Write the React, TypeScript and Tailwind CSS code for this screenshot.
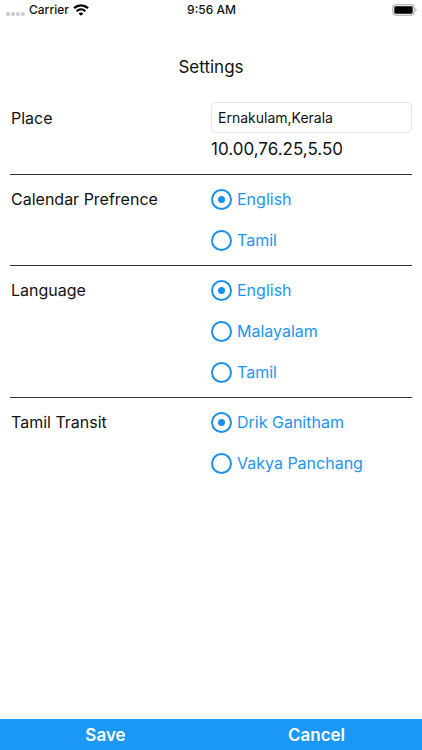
import { useState } from "react";

function StatusBar() {
  return (
    <header className="grid h-5 grid-cols-3 items-center pr-[5px] pl-[6px] text-[12px] leading-5 font-medium">
      <div className="flex items-center gap-1">
        <div className="flex pt-[7px]">
          {[0, 1, 2, 3].map((dot) => (
            <span key={dot} className="mr-px size-[4px] rounded-full bg-[#c9c9c9] last:mr-0" />
          ))}
        </div>
        <span>Carrier</span>
        <svg width="16" height="12" viewBox="0 0 16 12" fill="none" stroke="black" aria-hidden="true">
          <path d="M1 4.2C5 .4 11 .4 15 4.2" strokeWidth="2.3" />
          <path d="M3.6 7.2c2.6-2.4 6.2-2.4 8.8 0" strokeWidth="2.2" />
          <path d="M8 11.8 5.6 9.4c1.4-1.3 3.4-1.3 4.8 0z" fill="black" stroke="none" />
        </svg>
      </div>
      <time className="text-center">9:56 AM</time>
      <svg className="justify-self-end" width="25" height="12" viewBox="0 0 25 12" aria-label="Battery full">
        <rect x=".8" y=".8" width="21.4" height="10.4" rx="3" fill="white" stroke="#a0a0a0" />
        <rect x="2.3" y="2.3" width="18.4" height="7.4" rx="1.4" fill="black" />
        <path d="M23.4 4.2c1.5.6 1.5 3 0 3.6z" fill="#a0a0a0" />
      </svg>
    </header>
  );
}

type RadioSectionProps = { title: string; name: string; options: string[] };

function RadioSection({ title, name, options }: RadioSectionProps) {
  const [selected, setSelected] = useState(options[0]);
  return (
    <fieldset className="grid grid-cols-2 border-t border-[#333] py-1" aria-labelledby={name}>
      <h2 id={name} className="h-[41px] pl-px leading-[41px]">
        {title}
      </h2>
      <div>
        {options.map((option) => (
          <label key={option} className="flex h-[41px] items-center gap-[5px] leading-[41px] text-[#1c96f2]">
            <input
              type="radio"
              name={name}
              checked={selected === option}
              onChange={() => setSelected(option)}
              className="grid size-[21px] appearance-none place-items-center rounded-full border-2 border-[#1c8fe8] before:size-[7px] before:rounded-full checked:before:bg-[#1c8fe8]"
            />
            {option}
          </label>
        ))}
      </div>
    </fieldset>
  );
}

export default function App() {
  return (
    <div className="flex min-h-screen flex-col bg-white font-['Inter',sans-serif] text-[16px] leading-6 text-[#111]">
      <StatusBar />
      <main className="flex-1 px-[10px] pt-[35px]">
        <h1 className="text-center text-[17px]">Settings</h1>
        <form className="pt-[23px]">
          <div className="grid grid-cols-2 pb-3">
            <label htmlFor="place" className="h-8 pl-px leading-8">
              Place
            </label>
            <div>
              <input
                id="place"
                defaultValue="Ernakulam,Kerala"
                className="block h-[31px] w-full rounded-[5px] border border-[#e6e6e6] px-[6px] text-[14px]"
              />
              <output htmlFor="place" className="block pt-1 text-[17px] leading-[25px]">
                10.00,76.25,5.50
              </output>
            </div>
          </div>
          <RadioSection title="Calendar Prefrence" name="calendar" options={["English", "Tamil"]} />
          <RadioSection title="Language" name="language" options={["English", "Malayalam", "Tamil"]} />
          <RadioSection title="Tamil Transit" name="transit" options={["Drik Ganitham", "Vakya Panchang"]} />
        </form>
      </main>
      <footer className="grid h-[31px] grid-cols-2 bg-[#1b98f5] text-[17px] font-semibold text-white">
        <button type="button">Save</button>
        <button type="button">Cancel</button>
      </footer>
    </div>
  );
}
